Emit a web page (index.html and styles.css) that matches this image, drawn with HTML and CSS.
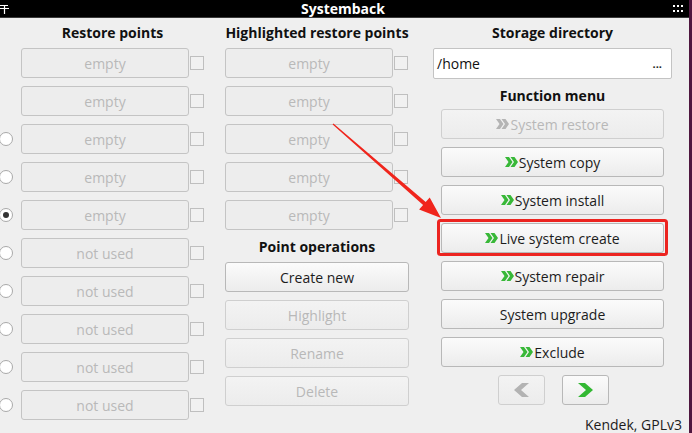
FILE: index.html
```html
<!DOCTYPE html>
<html>
<head>
<meta charset="utf-8">
<link rel="stylesheet" href="styles.css">
</head>
<body>
<div class="page">
  <div class="window">
    <div class="titlebar">
      <svg class="pin" width="9" height="10" viewBox="0 0 9 10"><path d="M0 1.5H8M0 4.5H9M4.5 1.5V10" stroke="#fff" stroke-width="1.2" fill="none"/></svg>
      <div class="title">Systemback</div>
      <svg class="dots" width="10" height="8" viewBox="0 0 10 8"><g fill="#fff"><rect x="0" y="0" width="2" height="2"/><rect x="4" y="0" width="2" height="2"/><rect x="8" y="0" width="2" height="2"/><rect x="0" y="5" width="2" height="2"/><rect x="4" y="5" width="2" height="2"/><rect x="8" y="5" width="2" height="2"/></g></svg>
    </div>
    <div class="content">
      <section class="col col-restore">
        <h2 class="heading heading-restore">Restore points</h2>
        <div class="rows">
          <div class="row"><span class="radio-slot"></span><div class="field">empty</div><span class="check"></span></div>
          <div class="row"><span class="radio-slot"></span><div class="field">empty</div><span class="check"></span></div>
          <div class="row"><span class="radio-slot"><span class="radio"></span></span><div class="field">empty</div><span class="check"></span></div>
          <div class="row"><span class="radio-slot"><span class="radio"></span></span><div class="field">empty</div><span class="check"></span></div>
          <div class="row"><span class="radio-slot"><span class="radio checked"></span></span><div class="field">empty</div><span class="check"></span></div>
          <div class="row"><span class="radio-slot"><span class="radio"></span></span><div class="field">not used</div><span class="check"></span></div>
          <div class="row"><span class="radio-slot"><span class="radio"></span></span><div class="field">not used</div><span class="check"></span></div>
          <div class="row"><span class="radio-slot"><span class="radio"></span></span><div class="field">not used</div><span class="check"></span></div>
          <div class="row"><span class="radio-slot"><span class="radio"></span></span><div class="field">not used</div><span class="check"></span></div>
          <div class="row"><span class="radio-slot"><span class="radio"></span></span><div class="field">not used</div><span class="check"></span></div>
        </div>
      </section>
      <section class="col col-high">
        <h2 class="heading">Highlighted restore points</h2>
        <div class="rows">
          <div class="row"><div class="field">empty</div><span class="check"></span></div>
          <div class="row"><div class="field">empty</div><span class="check"></span></div>
          <div class="row"><div class="field">empty</div><span class="check"></span></div>
          <div class="row"><div class="field">empty</div><span class="check"></span></div>
          <div class="row"><div class="field">empty</div><span class="check"></span></div>
        </div>
        <h2 class="heading heading-ops">Point operations</h2>
        <div class="buttons">
          <div class="btn">Create new</div>
          <div class="btn disabled">Highlight</div>
          <div class="btn disabled">Rename</div>
          <div class="btn disabled">Delete</div>
        </div>
      </section>
      <section class="col col-func">
        <h2 class="heading">Storage directory</h2>
        <div class="dir-input"><span class="dir-path">/home</span><span class="dir-more">...</span></div>
        <h2 class="heading heading-func">Function menu</h2>
        <div class="buttons func-buttons">
          <div class="btn disabled"><svg class="chev2" width="13" height="10" viewBox="0 0 13 10"><path d="M0 0H4L7.5 5 4 10H0L3.5 5ZM5.5 0H9.5L13 5 9.5 10H5.5L9 5Z"/></svg>System restore</div>
          <div class="btn"><svg class="chev2" width="13" height="10" viewBox="0 0 13 10"><path d="M0 0H4L7.5 5 4 10H0L3.5 5ZM5.5 0H9.5L13 5 9.5 10H5.5L9 5Z"/></svg>System copy</div>
          <div class="btn"><svg class="chev2" width="13" height="10" viewBox="0 0 13 10"><path d="M0 0H4L7.5 5 4 10H0L3.5 5ZM5.5 0H9.5L13 5 9.5 10H5.5L9 5Z"/></svg>System install</div>
          <div class="btn"><svg class="chev2" width="13" height="10" viewBox="0 0 13 10"><path d="M0 0H4L7.5 5 4 10H0L3.5 5ZM5.5 0H9.5L13 5 9.5 10H5.5L9 5Z"/></svg>Live system create</div>
          <div class="btn"><svg class="chev2" width="13" height="10" viewBox="0 0 13 10"><path d="M0 0H4L7.5 5 4 10H0L3.5 5ZM5.5 0H9.5L13 5 9.5 10H5.5L9 5Z"/></svg>System repair</div>
          <div class="btn">System upgrade</div>
          <div class="btn"><svg class="chev2" width="13" height="10" viewBox="0 0 13 10"><path d="M0 0H4L7.5 5 4 10H0L3.5 5ZM5.5 0H9.5L13 5 9.5 10H5.5L9 5Z"/></svg>Exclude</div>
        </div>
        <div class="nav">
          <div class="btn nav-btn disabled"><svg width="15" height="14" viewBox="0 0 15 14"><path class="nav-chev-off" d="M15 0H8L0 7 8 14H15L7 7Z"/></svg></div>
          <div class="btn nav-btn"><svg width="15" height="14" viewBox="0 0 15 14"><path class="nav-chev-on" d="M0 0H7L15 7 7 14H0L8 7Z"/></svg></div>
        </div>
        <div class="footer">Kendek, GPLv3</div>
      </section>
    </div>
  </div>
  <div class="strip"></div>
  <svg class="annot" width="692" height="433" viewBox="0 0 692 433">
    <rect x="438.5" y="220.5" width="228" height="34" rx="2" fill="none" stroke="#ec2420" stroke-width="3"/>
    <polygon fill="#f0251c" points="332.6,124.5 423.1,205.0 419.1,209.5 441,218 429.7,197.5 425.7,202.0 333.4,123.5"/>
  </svg>
</div>
</body>
</html>
```
FILE: styles.css
```css
* { box-sizing: border-box; }
html, body { margin: 0; padding: 0; }
body {
  width: 692px;
  height: 433px;
  overflow: hidden;
  background: #efefef;
  font-family: "Open Sans", "DejaVu Sans", sans-serif;
  font-size: 14px;
  color: #1c1c1c;
}
.page {
  position: relative;
  display: flex;
  width: 692px;
  height: 433px;
}
.window {
  width: 689px;
  height: 433px;
  background: #efefef;
  overflow: hidden;
}
.strip {
  width: 3px;
  height: 433px;
  background: #4f173f;
}
.titlebar {
  display: flex;
  align-items: center;
  height: 18px;
  background: #000;
  border-bottom: 1px solid #3a3a3a;
}
.pin { margin-top: 1px; flex: none; }
.title {
  flex: 1;
  text-align: center;
  color: #fff;
  font-weight: 700;
  font-size: 14px;
  line-height: 17px;
  padding-left: 4px;
}
.dots { flex: none; margin-right: 6px; margin-top: 1px; }

.content {
  display: flex;
  align-items: flex-start;
  padding-top: 6px;
}
.col { display: flex; flex-direction: column; }
.col-restore { width: 204px; }
.col-high { width: 184px; margin-left: 21px; }
.col-func { width: 239px; margin-left: 24px; }

.heading {
  margin: 0 0 7px;
  font-size: 14px;
  font-weight: 700;
  line-height: 17px;
  text-align: center;
  color: #111;
  white-space: nowrap;
}
.heading-restore { padding-left: 21px; }
.heading-ops { margin-top: 8px; margin-bottom: 7px; }
.heading-func { margin-top: 8px; margin-bottom: 5px; }

.rows { display: flex; flex-direction: column; gap: 8px; }
.row { display: flex; align-items: center; height: 30px; }
.radio-slot { width: 21px; flex: none; display: flex; align-items: center; }
.radio {
  width: 14px;
  height: 14px;
  margin-left: -1px;
  border-radius: 50%;
  border: 1px solid #a9a9a9;
  background: #fff;
  display: flex;
  align-items: center;
  justify-content: center;
}
.radio.checked::after {
  content: "";
  width: 6px;
  height: 6px;
  border-radius: 50%;
  background: #333;
}
.field {
  width: 168px;
  height: 30px;
  flex: none;
  border: 1px solid #c4c4c4;
  border-radius: 3px;
  background: #ededed;
  color: #b9b9b9;
  text-align: center;
  line-height: 29px;
}
.check {
  width: 14px;
  height: 14px;
  margin-left: 1px;
  flex: none;
  border: 1px solid #bfbfbf;
  background: #f1f1f1;
}

.buttons { display: flex; flex-direction: column; gap: 8px; }
.btn {
  height: 30px;
  display: flex;
  align-items: center;
  justify-content: center;
  border: 1px solid #b8b8b8;
  border-radius: 3px;
  background: linear-gradient(#fbfbfb, #ececec);
  color: #1c1c1c;
  white-space: nowrap;
}
.btn.disabled {
  border-color: #cfcfcf;
  background: linear-gradient(#f3f3f3, #ececec);
  color: #b8b8b8;
}
.chev2 { fill: #38b838; margin-right: 1px; flex: none; }
.btn.disabled .chev2 { fill: #b4b4b4; }

.dir-input {
  height: 31px;
  display: flex;
  align-items: center;
  justify-content: space-between;
  background: #fff;
  border: 1px solid #c3c3c3;
  border-radius: 2px;
  padding: 0 9px 0 3px;
}
.dir-path { color: #111; }
.dir-more { font-weight: 700; font-size: 11px; color: #222; }

.func-buttons { width: 223px; margin-left: 8px; }

.nav {
  display: flex;
  justify-content: center;
  gap: 17px;
  margin-top: 8px;
  padding-left: 1px;
}
.nav-btn { width: 47px; height: 30px; }
.nav-chev-on { fill: #33b833; }
.nav-chev-off { fill: #b3b3b3; }

.footer {
  margin-top: 11px;
  margin-right: -10px;
  text-align: right;
  line-height: 17px;
  color: #1c1c1c;
}

.annot {
  position: absolute;
  top: 0;
  left: 0;
  pointer-events: none;
}
```
